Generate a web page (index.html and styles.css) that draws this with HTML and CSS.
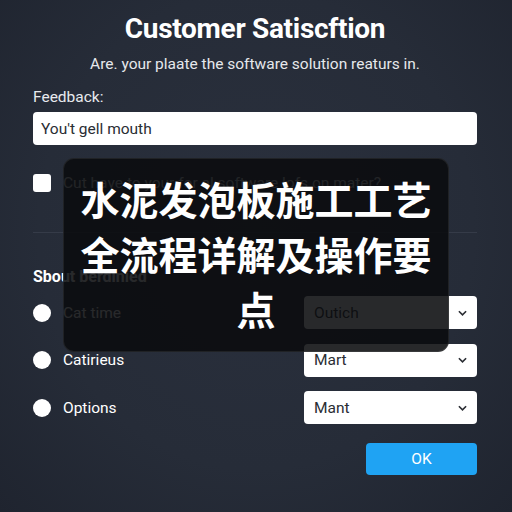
FILE: index.html
```html
<!DOCTYPE html>
<html>
<head>
    <title>Customer Satisfaction</title>
    <link rel="stylesheet" href="styles.css">
</head>

<body>
    <div class="panel">
        <h1 class="title">Customer Satiscftion</h1>
        <p class="subtitle">Are. your plaate the software solution reaturs in.</p>

        <label class="label">Feedback:</label>
        <div class="input">You't gell mouth</div>

        <div class="check-row">
            <span class="checkbox"></span>
            <span class="check-text">Cut have to your for al software lofs on mater?</span>
        </div>

        <div class="divider"></div>

        <h2 class="section">Sbout berdinied</h2>

        <div class="option-row">
            <span class="radio"></span>
            <span class="option-text">Cat time</span>
            <div class="select"><span>Outich</span><svg class="chev" viewBox="0 0 10 6"><path d="M1 1l4 4 4-4" /></svg></div>
        </div>
        <div class="option-row">
            <span class="radio"></span>
            <span class="option-text">Catirieus</span>
            <div class="select"><span>Mart</span><svg class="chev" viewBox="0 0 10 6"><path d="M1 1l4 4 4-4" /></svg></div>
        </div>
        <div class="option-row">
            <span class="radio"></span>
            <span class="option-text">Options</span>
            <div class="select"><span>Mant</span><svg class="chev" viewBox="0 0 10 6"><path d="M1 1l4 4 4-4" /></svg></div>
        </div>

        <div class="actions">
            <button type="button" class="ok-button">OK</button>
        </div>
    </div>

    <div class="overlay">
        <p>水泥发泡板施工工艺<br>全流程详解及操作要<br>点</p>
    </div>
</body>
</html>
```

FILE: styles.css
```css
*{
    margin: 0;
    padding: 0;
    box-sizing: border-box;
}

body {
    width: 512px;
    height: 512px;
    overflow: hidden;
    font-family: Roboto, "Liberation Sans", sans-serif;
    color: #ffffff;
    background: radial-gradient(ellipse at 50% 45%, #2a303d 0%, #262c38 60%, #1f242f 100%);
    position: relative;
}

.panel {
    padding: 11px 35px 0 33px;
    display: flex;
    flex-direction: column;
}

.title {
    text-align: center;
    font-size: 28px;
    font-weight: bold;
    line-height: 36px;
    letter-spacing: -0.3px;
}
.subtitle {
    text-align: center;
    font-size: 15.5px;
    line-height: 20px;
    margin-top: 7px;
    color: #e6e8ec;
}

.label {
    margin-top: 13px;
    font-size: 15.5px;
    line-height: 20px;
    color: #e8eaee;
}
.input {
    margin-top: 5px;
    height: 33px;
    background: #ffffff;
    border-radius: 4px;
    color: #2a2d33;
    font-size: 15.5px;
    padding: 0 8px;
    display: flex;
    align-items: center;
}

.check-row {
    margin-top: 29px;
    display: flex;
    align-items: center;
    gap: 12px;
}
.checkbox {
    width: 18px;
    height: 18px;
    background: #ffffff;
    border-radius: 3px;
}
.check-text {
    font-size: 15.5px;
    color: #d0d3d8;
}

.divider {
    margin-top: 40px;
    height: 1px;
    background: #353b48;
}

.section {
    margin-top: 34px;
    font-size: 16px;
    font-weight: bold;
    line-height: 20px;
}

.option-row {
    margin-top: 9px;
    display: flex;
    align-items: center;
    height: 33px;
}
.option-row + .option-row {
    margin-top: 14.5px;
}
.radio {
    width: 18px;
    height: 18px;
    border-radius: 50%;
    background: #ffffff;
}
.option-text {
    margin-left: 12px;
    font-size: 15.5px;
    flex: 1;
}
.select {
    width: 173px;
    height: 33px;
    background: #ffffff;
    border-radius: 4px;
    display: flex;
    align-items: center;
    justify-content: space-between;
    padding: 0 10px;
    color: #2a2d33;
    font-size: 15.5px;
}
.chev {
    width: 9px;
    height: 6px;
    fill: none;
    stroke: #2a2d33;
    stroke-width: 1.8;
}

.actions {
    margin-top: 19px;
    display: flex;
    justify-content: flex-end;
}
.ok-button {
    width: 111px;
    height: 32px;
    border: none;
    border-radius: 4px;
    background: #1fa3f3;
    color: #ffffff;
    font-family: Roboto, "Liberation Sans", sans-serif;
    font-size: 15.5px;
}

.overlay {
    position: absolute;
    left: 63px;
    top: 158px;
    width: 386px;
    height: 194px;
    background: rgba(10, 11, 14, 0.88);
    border: 1px solid rgba(255, 255, 255, 0.08);
    border-radius: 11px;
    padding-top: 12px;
}
.overlay p {
    text-align: center;
    font-family: "Noto Sans CJK SC", sans-serif;
    font-weight: bold;
    font-size: 39px;
    line-height: 55px;
    color: #ffffff;
}
```
